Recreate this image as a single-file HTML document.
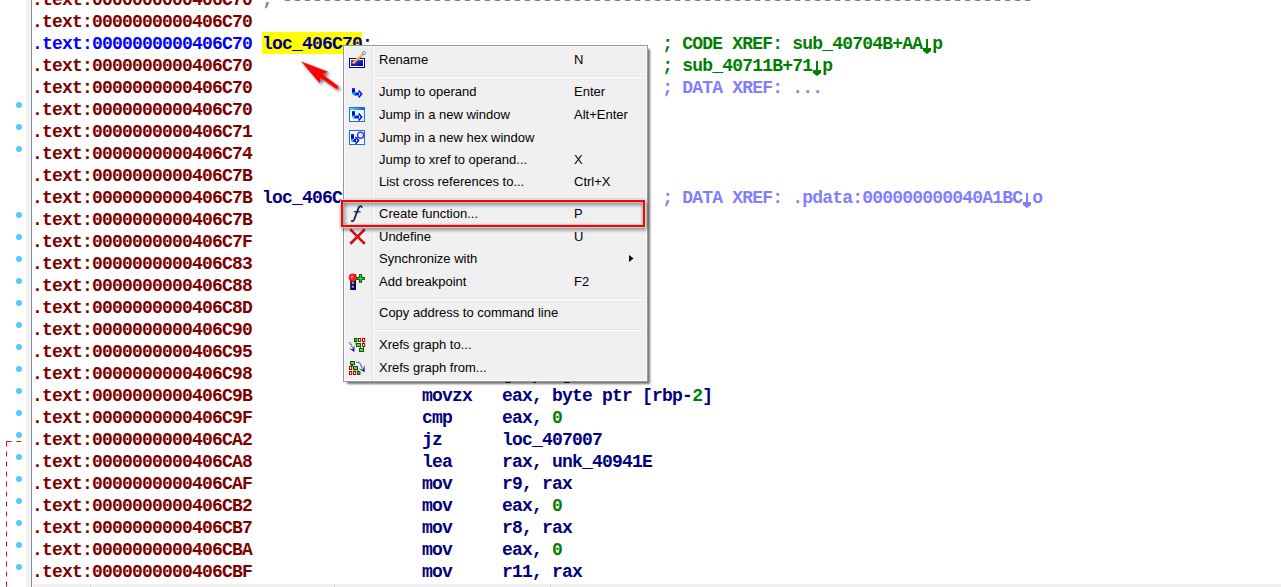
<!DOCTYPE html>
<html><head><meta charset="utf-8">
<style>
html,body{margin:0;padding:0;}
body{width:1281px;height:587px;position:relative;overflow:hidden;background:#fff;}
.ln{position:absolute;left:32px;height:22px;line-height:22px;white-space:pre;font-family:"Liberation Mono",monospace;font-weight:bold;font-size:18px;letter-spacing:-0.8px;padding-top:1px;}
.strip{position:absolute;left:26px;top:0;width:4px;height:587px;background:#f0f0f0;border-right:1px solid #f6f6f5;}
.vline{position:absolute;left:31px;top:0;width:1px;height:587px;background:#868a94;}
.dot{position:absolute;left:16px;width:6px;height:6px;border-radius:50%;background:#5ac8fa;}
.hl{position:absolute;left:262px;top:32px;width:100px;height:22px;background:#ffff00;}
.bbar{position:absolute;left:33px;top:584px;width:1248px;height:3px;background:#f0f0f0;border-top:0;}
.menu{position:absolute;left:343px;top:45px;width:303px;height:335px;border:1px solid #979797;background:#f0f0f0;box-shadow:inset 0 0 0 1px #fafafa,3px 3px 2px -1px rgba(0,0,0,0.55);font-family:"Liberation Sans",sans-serif;font-size:13px;color:#000;}
.gut{position:absolute;left:28px;top:0;width:1px;height:335px;background:#e2e3e3;}
.gut2{position:absolute;left:29px;top:0;width:1px;height:335px;background:#fff;}
.sep{position:absolute;left:30px;width:270px;height:1px;background:#e2e3e3;border-bottom:1px solid #fff;}
.mi{position:absolute;left:35px;height:15px;line-height:15px;white-space:pre;}
.sc{position:absolute;left:230px;height:15px;line-height:15px;white-space:pre;}
.ico{position:absolute;left:5px;}
.ar{display:inline-block;vertical-align:top;position:relative;top:-1px;}
</style></head><body>
<div class="strip"></div><div class="vline"></div>
<svg style="position:absolute;left:0;top:0" width="30" height="587"><path d="M6.5 441.5H21M6.5 441.5V587" stroke="#ff0000" stroke-width="1" stroke-dasharray="5 5" fill="none"/></svg>
<div class="dot" style="top:102px"></div>
<div class="dot" style="top:124px"></div>
<div class="dot" style="top:146px"></div>
<div class="dot" style="top:212px"></div>
<div class="dot" style="top:234px"></div>
<div class="dot" style="top:256px"></div>
<div class="dot" style="top:278px"></div>
<div class="dot" style="top:300px"></div>
<div class="dot" style="top:322px"></div>
<div class="dot" style="top:344px"></div>
<div class="dot" style="top:366px"></div>
<div class="dot" style="top:388px"></div>
<div class="dot" style="top:410px"></div>
<div class="dot" style="top:432px"></div>
<div class="dot" style="top:454px"></div>
<div class="dot" style="top:476px"></div>
<div class="dot" style="top:498px"></div>
<div class="dot" style="top:520px"></div>
<div class="dot" style="top:542px"></div>
<div class="dot" style="top:564px"></div>
<div class="hl"></div>
<div class="ln" style="top:-12px"><span style="color:#800000">.text:0000000000406C70</span> <span style="color:#808080">; ---------------------------------------------------------------------------</span></div>
<div class="ln" style="top:10px"><span style="color:#800000">.text:0000000000406C70</span></div>
<div class="ln" style="top:32px"><span style="color:#0000ff">.text:0000000000406C70</span> <span style="color:#000080">loc_406C70:</span>                             <span style="color:#008000">; CODE XREF: sub_40704B+AA<svg class="ar" width="10" height="22"><path d="M4 7H6V16H9V19L5 22L1 19V16H4Z" fill="currentColor"/></svg>p</span></div>
<div class="ln" style="top:54px"><span style="color:#800000">.text:0000000000406C70</span>                                         <span style="color:#008000">; sub_40711B+71<svg class="ar" width="10" height="22"><path d="M4 7H6V16H9V19L5 22L1 19V16H4Z" fill="currentColor"/></svg>p</span></div>
<div class="ln" style="top:76px"><span style="color:#800000">.text:0000000000406C70</span>                                         <span style="color:#8080ff">; DATA XREF: ...</span></div>
<div class="ln" style="top:98px"><span style="color:#800000">.text:0000000000406C70</span>                 <span style="color:#000080">push    rbp</span></div>
<div class="ln" style="top:120px"><span style="color:#800000">.text:0000000000406C71</span>                 <span style="color:#000080">mov     rbp, rsp</span></div>
<div class="ln" style="top:142px"><span style="color:#800000">.text:0000000000406C74</span>                 <span style="color:#000080">sub     rsp, 50h</span></div>
<div class="ln" style="top:164px"><span style="color:#800000">.text:0000000000406C7B</span></div>
<div class="ln" style="top:186px"><span style="color:#800000">.text:0000000000406C7B</span> <span style="color:#000080">loc_406C7B:</span>                             <span style="color:#8080ff">; DATA XREF: .pdata:000000000040A1BC<svg class="ar" width="10" height="22"><path d="M4 7H6V16H9V19L5 22L1 19V16H4Z" fill="currentColor"/></svg>o</span></div>
<div class="ln" style="top:208px"><span style="color:#800000">.text:0000000000406C7B</span>                 <span style="color:#000080">mov     [rbp+10h], rcx</span></div>
<div class="ln" style="top:230px"><span style="color:#800000">.text:0000000000406C7F</span>                 <span style="color:#000080">mov     [rbp+18h], rdx</span></div>
<div class="ln" style="top:252px"><span style="color:#800000">.text:0000000000406C83</span>                 <span style="color:#000080">mov     [rbp+20h], r8</span></div>
<div class="ln" style="top:274px"><span style="color:#800000">.text:0000000000406C88</span>                 <span style="color:#000080">mov     [rbp+28h], r9</span></div>
<div class="ln" style="top:296px"><span style="color:#800000">.text:0000000000406C8D</span>                 <span style="color:#000080">mov     eax, edx</span></div>
<div class="ln" style="top:318px"><span style="color:#800000">.text:0000000000406C90</span>                 <span style="color:#000080">mov     [rbp-4], eax</span></div>
<div class="ln" style="top:340px"><span style="color:#800000">.text:0000000000406C95</span>                 <span style="color:#000080">mov     [rbp-6], ax</span></div>
<div class="ln" style="top:362px"><span style="color:#800000">.text:0000000000406C98</span>                 <span style="color:#000080">mov     [rbp-2], al</span></div>
<div class="ln" style="top:384px"><span style="color:#800000">.text:0000000000406C9B</span>                 <span style="color:#000080">movzx   eax, byte ptr [rbp-<span style="color:#008000">2</span>]</span></div>
<div class="ln" style="top:406px"><span style="color:#800000">.text:0000000000406C9F</span>                 <span style="color:#000080">cmp     eax, <span style="color:#008000">0</span></span></div>
<div class="ln" style="top:428px"><span style="color:#800000">.text:0000000000406CA2</span>                 <span style="color:#000080">jz      loc_407007</span></div>
<div class="ln" style="top:450px"><span style="color:#800000">.text:0000000000406CA8</span>                 <span style="color:#000080">lea     rax, unk_40941E</span></div>
<div class="ln" style="top:472px"><span style="color:#800000">.text:0000000000406CAF</span>                 <span style="color:#000080">mov     r9, rax</span></div>
<div class="ln" style="top:494px"><span style="color:#800000">.text:0000000000406CB2</span>                 <span style="color:#000080">mov     eax, <span style="color:#008000">0</span></span></div>
<div class="ln" style="top:516px"><span style="color:#800000">.text:0000000000406CB7</span>                 <span style="color:#000080">mov     r8, rax</span></div>
<div class="ln" style="top:538px"><span style="color:#800000">.text:0000000000406CBA</span>                 <span style="color:#000080">mov     eax, <span style="color:#008000">0</span></span></div>
<div class="ln" style="top:560px"><span style="color:#800000">.text:0000000000406CBF</span>                 <span style="color:#000080">mov     r11, rax</span></div>
<div class="bbar"></div><div style="position:absolute;left:90px;top:585px;width:1px;height:2px;background:#d4d4d4"></div><div style="position:absolute;left:334px;top:585px;width:1px;height:2px;background:#d4d4d4"></div><div style="position:absolute;left:550px;top:585px;width:1px;height:2px;background:#d4d4d4"></div>
<div class="menu">
<div class="gut"></div><div class="gut2"></div>
<div class="sep" style="top:30px"></div>
<div class="sep" style="top:152px"></div>
<div class="sep" style="top:252px"></div>
<div class="sep" style="top:283px"></div>
<div class="mi" style="top:6px">Rename</div>
<div class="sc" style="top:6px">N</div>
<div class="mi" style="top:38px">Jump to operand</div>
<div class="sc" style="top:38px">Enter</div>
<div class="mi" style="top:61px">Jump in a new window</div>
<div class="sc" style="top:61px">Alt+Enter</div>
<div class="mi" style="top:84px">Jump in a new hex window</div>
<div class="mi" style="top:106px">Jump to xref to operand...</div>
<div class="sc" style="top:106px">X</div>
<div class="mi" style="top:128px">List cross references to...</div>
<div class="sc" style="top:128px">Ctrl+X</div>
<div class="mi" style="top:160px">Create function...</div>
<div class="sc" style="top:160px">P</div>
<div class="mi" style="top:183px">Undefine</div>
<div class="sc" style="top:183px">U</div>
<div class="mi" style="top:205px">Synchronize with</div>
<div class="mi" style="top:228px">Add breakpoint</div>
<div class="sc" style="top:228px">F2</div>
<div class="mi" style="top:259px">Copy address to command line</div>
<div class="mi" style="top:291px">Xrefs graph to...</div>
<div class="mi" style="top:314px">Xrefs graph from...</div>
<svg style="position:absolute;left:285px;top:209px" width="6" height="8"><path d="M0 0L4.5 3.5L0 7Z" fill="#000"/></svg>

</div>
<svg style="position:absolute;left:0;top:0;pointer-events:none" width="1281" height="587">
<defs>
<linearGradient id="rg" x1="0" y1="0" x2="1" y2="1"><stop offset="0" stop-color="#3050e0"/><stop offset="1" stop-color="#0000a0"/></linearGradient>
<linearGradient id="tb" x1="0" y1="0" x2="1" y2="0"><stop offset="0" stop-color="#50e8ff"/><stop offset="1" stop-color="#2050d0"/></linearGradient>
<linearGradient id="av" x1="0" y1="0" x2="0" y2="1"><stop offset="0" stop-color="#4040e0"/><stop offset="0.4" stop-color="#0000c0"/><stop offset="1" stop-color="#0010d0"/></linearGradient><linearGradient id="ah" x1="0" y1="0" x2="1" y2="0"><stop offset="0" stop-color="#1080e0"/><stop offset="0.5" stop-color="#1030e0"/><stop offset="1" stop-color="#0000b0"/></linearGradient>
<linearGradient id="ab" x1="0" y1="0" x2="0" y2="1"><stop offset="0" stop-color="#0000d0"/><stop offset="0.6" stop-color="#0020e0"/><stop offset="1" stop-color="#20c0e0"/></linearGradient>
<filter id="rs" x="-10%" y="-50%" width="120%" height="200%"><feGaussianBlur in="SourceAlpha" stdDeviation="2"/><feOffset dx="0.5" dy="1.5"/><feComponentTransfer><feFuncA type="linear" slope="0.9"/></feComponentTransfer><feMerge><feMergeNode/><feMergeNode in="SourceGraphic"/></feMerge></filter>
<filter id="sh" x="-50%" y="-50%" width="200%" height="200%"><feGaussianBlur in="SourceAlpha" stdDeviation="1.6"/><feOffset dx="2" dy="2"/><feComponentTransfer><feFuncA type="linear" slope="0.6"/></feComponentTransfer><feMerge><feMergeNode/><feMergeNode in="SourceGraphic"/></feMerge></filter>
</defs>
<!-- rename icon -->
<rect x="349.5" y="58.5" width="15" height="9" fill="#fff" stroke="#0000b0" stroke-width="1"/>
<rect x="351" y="60" width="12" height="6" fill="url(#rg)"/>
<path d="M352.3 63.3L361.9 53.9" stroke="#ffc820" stroke-width="1.3"/>
<path d="M353.2 64.2L362.8 54.8" stroke="#f07818" stroke-width="1.3"/>
<path d="M352.8 63.8L362.3 54.4" stroke="#fff8d0" stroke-width="0.5"/>
<path d="M351.6 65.2l1.9-0.6-1.3-1.3z" fill="#000"/>
<circle cx="363.9" cy="53.1" r="1.5" fill="#e0f4ff" stroke="#3a9ac8" stroke-width="1"/>
<!-- jump arrow -->
<g transform="translate(352,88) scale(1.0)">
<rect x="0" y="0" width="3" height="5" fill="url(#av)"/>
<path d="M0 5H3V4.5H7V7.5H2L0 5.5Z" fill="url(#ah)"/>
<path d="M0 4.5L1 6.8L2.2 7.5L3 4.5Z" fill="#20c8e0"/>
<path d="M6.6 2.4L9.7 6L6.6 9.6" stroke="#0000ff" stroke-width="1.5" fill="none"/>
</g>
<!-- jump new window -->
<rect x="349.5" y="107.5" width="15" height="14" fill="#e0ffff" stroke="#2a6ad8" stroke-width="1"/>
<rect x="350" y="108" width="14" height="2" fill="url(#tb)"/>
<g transform="translate(352,111) scale(1.0)">
<rect x="0" y="0" width="3" height="5" fill="url(#av)"/>
<path d="M0 5H3V4.5H7V7.5H2L0 5.5Z" fill="url(#ah)"/>
<path d="M0 4.5L1 6.8L2.2 7.5L3 4.5Z" fill="#20c8e0"/>
<path d="M6.6 2.4L9.7 6L6.6 9.6" stroke="#0000ff" stroke-width="1.5" fill="none"/>
</g>
<!-- jump new hex window -->
<rect x="349.5" y="130.5" width="15" height="14" fill="#e8fff8" stroke="#2a6ad8" stroke-width="1"/>
<path d="M350 131H364" stroke="url(#tb)" stroke-width="1"/>
<circle cx="360.6" cy="135.2" r="3.1" fill="#e0e8ff" stroke="#3030ff" stroke-width="1.3"/>
<rect x="351" y="134" width="3" height="5" fill="url(#av)"/>
<path d="M351 139H354V138.8H356V142H352.6L351 140.4Z" fill="url(#ah)"/>
<path d="M351 138.8L351.8 141L352.8 142L354 138.8Z" fill="#20c8e0"/>
<path d="M355.4 137.1L358.6 140.4L355.4 143.7" stroke="#0000ff" stroke-width="1.5" fill="none"/>
<!-- f icon -->
<path d="M362 207.6C361.8 205.8 359.6 205.4 358.7 207.6L354.3 219.3C353.6 221.4 352 221.7 351.2 220.6" stroke="#0a1a50" stroke-width="1.7" fill="none"/><path d="M353.8 211.8H360.6" stroke="#0a1a50" stroke-width="1.2"/>
<!-- undefine X -->
<path d="M351.3 230.3L363.8 242.8M363.8 230.3L351.3 242.8" stroke="#c00010" stroke-width="2.6" stroke-linecap="square"/>
<path d="M351.3 230.3L363.8 242.8M363.8 230.3L351.3 242.8" stroke="#ff2020" stroke-width="0.9" stroke-linecap="square"/>
<!-- breakpoint -->
<rect x="350.2" y="274" width="5.8" height="16" fill="#000070"/>
<circle cx="352.9" cy="282.9" r="1.3" fill="#9a9a8a"/>
<circle cx="352.9" cy="286.8" r="1.3" fill="#9a9a8a"/>
<circle cx="352.8" cy="277.6" r="3.8" fill="#ff2010" stroke="#e00000" stroke-width="0.6"/>
<circle cx="352" cy="276.7" r="1.3" fill="#ff9080"/>
<path d="M360.5 274.3V282.8M356.3 278.5H364.8" stroke="#004000" stroke-width="3.2"/>
<path d="M360.5 275.3V281.8M357.3 278.5H363.8" stroke="#30d040" stroke-width="1.5"/>
<!-- xrefs to -->
<g stroke-width="1">
<path d="M356 341.5V344.5H358.5M360.5 346.5V349.5H361.5M363.5 341.5V343.5M363.5 346.5V348" stroke="#00a000" fill="none"/>
<rect x="354.5" y="338.5" width="2.4" height="3" fill="#40c040" stroke="#006000"/>
<rect x="358.5" y="338.5" width="2.2" height="3" fill="#fff" stroke="#c00000"/>
<rect x="362.5" y="338.5" width="2.2" height="3" fill="#fff" stroke="#c00000"/>
<rect x="356.5" y="343.5" width="4" height="3" fill="#60d060" stroke="#006000"/>
<rect x="362.5" y="343.5" width="2.2" height="3" fill="#fff" stroke="#c00000"/>
<rect x="359.5" y="348.5" width="4" height="3" fill="#60d060" stroke="#006000"/>
</g>
<path d="M349.8 342.3L353.6 349.6" stroke="#3050a0" stroke-width="1.3" stroke-dasharray="1.2 0.6"/>
<path d="M354.4 345V351.9L349 348.3L352.9 349.6Z" fill="#001080"/>
<!-- xrefs from -->
<g stroke-width="1">
<path d="M351.5 364.5V366.5M352.5 364.5V366.5M355 370V371.5M358 370V371.5" stroke="#c00000" fill="none"/>
<rect x="350.5" y="361.5" width="4" height="3" fill="#60d060" stroke="#006000"/>
<rect x="349.5" y="366.5" width="2.2" height="3" fill="#fff" stroke="#c00000"/>
<rect x="353.5" y="366.5" width="4" height="3" fill="#60d060" stroke="#006000"/>
<rect x="349.5" y="371.5" width="2.2" height="3" fill="#fff" stroke="#c00000"/>
<rect x="353.5" y="371.5" width="2.2" height="3" fill="#fff" stroke="#c00000"/>
<rect x="357.5" y="371.5" width="2.4" height="3" fill="#40c040" stroke="#006000"/>
</g>
<path d="M356.3 362.3H359.5L362.5 368.5" stroke="#3050a0" stroke-width="1.3" fill="none" stroke-dasharray="1.2 0.6"/>
<path d="M364.6 365V372.2L358.6 368.4L363 369.8Z" fill="#001080"/>
<!-- red rect annotation -->
<g filter="url(#rs)"><rect x="342" y="201" width="302" height="25" fill="none" stroke="#ff0000" stroke-width="2"/></g>
<rect x="340.5" y="199.5" width="305" height="28" fill="none" stroke="#cfe3e3" stroke-width="1" opacity="0.8"/><rect x="343.5" y="202.5" width="299" height="22" fill="none" stroke="#b8c8c8" stroke-width="1" opacity="0.7"/>
<!-- red arrow -->
<g filter="url(#sh)">
<path d="M301.8 61.9L327.4 71.8L322.3 74.4L338 86.2L337.8 88.6L335.6 88.2L320.3 77.2L319.5 82.7Z" fill="#ff0000" stroke="#ff0000" stroke-width="0.5" stroke-linejoin="round"/>
</g>
</svg>

</body></html>
